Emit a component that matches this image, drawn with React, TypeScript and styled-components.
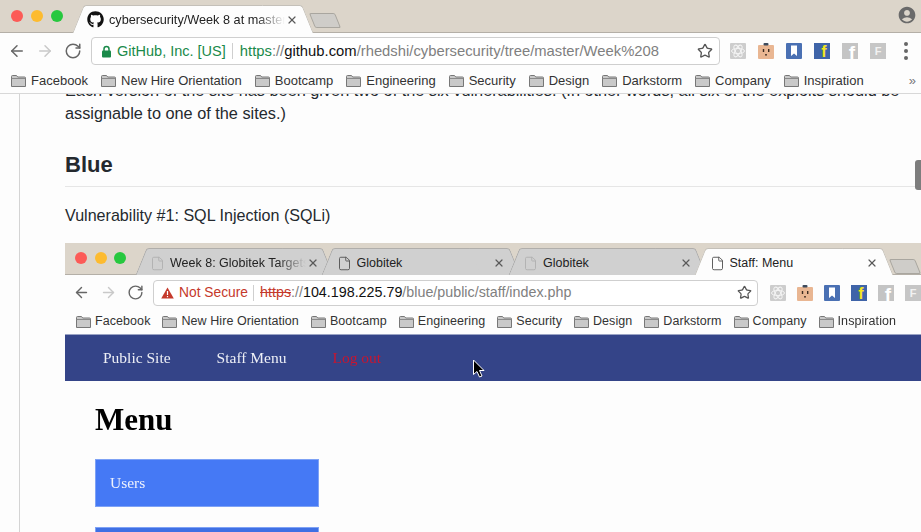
import React from 'react'
import styled, { createGlobalStyle } from 'styled-components'
import { ArrowLeft, ArrowRight, File, RotateCw, Star, X } from 'lucide-react'
import { FaGithub } from 'react-icons/fa'
import { MdAccountCircle } from 'react-icons/md'

const GlobalStyle = createGlobalStyle`
    html, body {
        margin: 0;
        padding: 0;
        width: 921px;
        height: 532px;
        overflow: hidden;
        background: #fdfdfd;
        font-family: 'Liberation Sans', Arial, sans-serif;
    }
`

const Container = styled.div`
    position: relative;
    width: 921px;
    height: 532px;
    display: flex;
    flex-direction: column;
    overflow: hidden;
`

/* browser chrome, used for the real window and for the one in the screenshot */
const TabStrip = styled.div<{ $compact?: boolean }>`
    flex: none;
    display: flex;
    align-items: center;
    box-sizing: border-box;
    height: ${(p) => (p.$compact ? 32 : 33)}px;
    padding-left: ${(p) => (p.$compact ? 10 : 11)}px;
    background: #dcd5ca;
    box-shadow: inset 0 -1px 0 #b4afa7;
`

const Lights = styled.div<{ $compact?: boolean }>`
    display: flex;
    gap: ${(p) => (p.$compact ? 7.5 : 8)}px;
    margin-right: 9px;
    margin-top: ${(p) => (p.$compact ? -3 : -1)}px;
`

const Light = styled.span<{ $color: string }>`
    width: 12px;
    height: 12px;
    border-radius: 50%;
    background: ${(p) => p.$color};
`

const Tab = styled.div<{ $active?: boolean; $width: number; $compact?: boolean; $overlap?: boolean }>`
    position: relative;
    z-index: ${(p) => (p.$active ? 2 : 1)};
    align-self: flex-end;
    flex: none;
    display: flex;
    align-items: center;
    box-sizing: border-box;
    width: ${(p) => p.$width}px;
    height: ${(p) => (p.$compact ? 27 : 28)}px;
    margin-left: ${(p) => (p.$overlap ? -12 : 0)}px;
    padding: ${(p) => (p.$compact ? 3 : 1)}px 15px 0;
    color: #222;

    &::before, &::after {
        content: '';
        position: absolute;
        top: 0;
        bottom: 0;
        width: 40px;
        box-sizing: border-box;
        background: ${(p) => (p.$active ? '#fdfdfd' : '#d0d0d0')};
        border-top: 1px solid ${(p) => (p.$active ? '#c4c0b9' : '#b0aeab')};
    }

    &::before {
        left: 5.5px;
        border-left: 1px solid ${(p) => (p.$active ? '#c4c0b9' : '#a8a8a8')};
        border-top-left-radius: 3px;
        transform: skewX(-22deg);
    }

    &::after {
        right: 5.5px;
        border-right: 1px solid ${(p) => (p.$active ? '#c4c0b9' : '#a8a8a8')};
        border-top-right-radius: 3px;
        transform: skewX(22deg);
    }
`

const TabFill = styled.div<{ $active?: boolean }>`
    position: absolute;
    top: 0;
    bottom: 0;
    left: 25px;
    right: 25px;
    background: ${(p) => (p.$active ? '#fdfdfd' : '#d0d0d0')};
    border-top: 1px solid ${(p) => (p.$active ? '#c4c0b9' : '#b0aeab')};
`

const TabIcon = styled.span<{ $dim?: boolean; $width: number }>`
    position: relative;
    z-index: 1;
    flex: none;
    display: flex;
    width: ${(p) => p.$width}px;
    color: #555;
    opacity: ${(p) => (p.$dim ? 0.25 : 1)};
`

const TabTitle = styled.span<{ $fade?: boolean; $size: number }>`
    position: relative;
    z-index: 1;
    flex: 1;
    min-width: 0;
    margin-left: 2px;
    font-size: ${(p) => p.$size}px;
    white-space: nowrap;
    overflow: hidden;
    ${(p) => (p.$fade ? 'mask-image: linear-gradient(to right, #000 calc(100% - 30px), transparent calc(100% - 1px));' : '')}
`

const TabClose = styled.span`
    position: relative;
    z-index: 1;
    flex: none;
    display: flex;
    color: #5a5a5a;
`

const NewTab = styled.div<{ $compact?: boolean }>`
    flex: none;
    align-self: flex-start;
    box-sizing: border-box;
    width: 26px;
    height: 15px;
    margin-top: ${(p) => (p.$compact ? 16 : 13)}px;
    margin-left: -1px;
    background: #cfcdc9;
    border: 1px solid #a9a69f;
    border-radius: 2px;
    transform: skewX(22deg);
`

const Profile = styled.span`
    display: flex;
    margin-left: auto;
    margin-right: 4px;
    margin-top: -3px;
    color: #6a6a6a;
`

const Toolbar = styled.div<{ $compact?: boolean }>`
    flex: none;
    display: flex;
    align-items: center;
    height: ${(p) => (p.$compact ? 35 : 36)}px;
    padding-left: 8px;
    background: #fdfdfd;
`

const NavButtons = styled.div`
    display: flex;
    gap: 10px;
    margin-right: 9px;
    color: #666;
`

const AddressBar = styled.div<{ $compact?: boolean }>`
    display: flex;
    align-items: center;
    box-sizing: border-box;
    flex: ${(p) => (p.$compact ? '0 0 605px' : '1')};
    min-width: 0;
    height: ${(p) => (p.$compact ? 26 : 28)}px;
    padding: ${(p) => (p.$compact ? '0 5px 0 7px' : '0 6px 0 9px')};
    background: #fff;
    border: 1px solid #cfcfcf;
    border-radius: 4px;
    font-size: ${(p) => (p.$compact ? 13.8 : 14.5)}px;
    white-space: nowrap;
`

const Security = styled.span<{ $color: string }>`
    display: flex;
    align-items: center;
    gap: 5px;
    color: ${(p) => p.$color};
`

const Divider = styled.span<{ $compact?: boolean }>`
    width: 1px;
    height: 16px;
    margin: 0 ${(p) => (p.$compact ? '6px 0 5px' : '7px 0 6px')};
    background: #cfcfcf;
`

const Url = styled.span<{ $size: number }>`
    flex: 1;
    color: #808080;
    font-size: ${(p) => p.$size}px;
`

const UrlHost = styled.span`
    color: #111;
`

const SecureScheme = styled.span`
    color: #1a8a4a;
`

const BrokenScheme = styled.span`
    color: #c5392b;
    text-decoration: line-through;
`

const Extensions = styled.div<{ $compact?: boolean }>`
    flex: none;
    display: flex;
    align-items: center;
    gap: ${(p) => (p.$compact ? 11 : 12)}px;
    margin-left: ${(p) => (p.$compact ? 12 : 10)}px;
`

const MenuDots = styled.span`
    flex: none;
    display: flex;
    flex-direction: column;
    gap: 3px;
    margin: 0 13px 0 18px;

    i {
        width: 4px;
        height: 4px;
        border-radius: 50%;
        background: #666;
    }
`

const BookmarkBar = styled.div<{ $compact?: boolean }>`
    flex: none;
    display: flex;
    align-items: center;
    gap: ${(p) => (p.$compact ? 12 : 13)}px;
    box-sizing: border-box;
    height: ${(p) => (p.$compact ? 24 : 25)}px;
    padding-left: 11px;
    padding-bottom: 1px;
    background: #fdfdfd;
    border-bottom: ${(p) => (p.$compact ? 'none' : '1px solid #d8d8d8')};
    font-size: ${(p) => (p.$compact ? 12.5 : 13)}px;
    letter-spacing: ${(p) => (p.$compact ? 0.07 : 0)}px;
    color: #333;
`

const Bookmark = styled.span<{ $compact?: boolean }>`
    display: flex;
    align-items: center;
    gap: ${(p) => (p.$compact ? 4 : 5)}px;
    white-space: nowrap;
`

const More = styled.span`
    margin-left: auto;
    margin-right: 5px;
    color: #777;
    font-size: 13px;
`

/* page below the chrome */
const Page = styled.div`
    position: relative;
    flex: 1;
    min-height: 0;
    display: flex;
    overflow: hidden;
    background: #fdfdfd;
`

const Gutter = styled.div`
    flex: none;
    width: 1px;
    margin-left: 19px;
    background: #d4d4d4;
`

const Article = styled.div`
    flex: 1;
    min-width: 0;
    margin-top: -15.5px;
    padding-left: 45px;
    color: #24292e;
    line-height: 23px;
`

const Paragraph = styled.p<{ $size: number }>`
    margin: 0;
    font-size: ${(p) => p.$size}px;
    white-space: nowrap;
`

const Heading = styled.h2`
    margin: 25.5px 0 16.5px;
    padding-bottom: 6px;
    border-bottom: 1px solid #e6e6e6;
    font-size: 22px;
    font-weight: 700;
    line-height: 30px;
`

const Shot = styled.div`
    margin-top: 16.5px;
    overflow: hidden;
    filter: blur(0.3px);
`

const ShotNav = styled.nav`
    display: flex;
    gap: 46px;
    height: 47px;
    align-items: center;
    box-sizing: border-box;
    padding-left: 38px;
    padding-bottom: 1px;
    background: #344488;
    border-top: 1px solid #9aa3c4;
    font-family: 'Liberation Serif', 'Times New Roman', serif;
    font-size: 15.5px;
`

const ShotLink = styled.span<{ $danger?: boolean }>`
    color: ${(p) => (p.$danger ? '#c8152f' : '#eef0f6')};
`

const ShotMain = styled.div`
    padding: 20px 30px 0;
    font-family: 'Liberation Serif', 'Times New Roman', serif;
`

const ShotTitle = styled.h1`
    margin: 0 0 20px;
    font-size: 31px;
    line-height: 38px;
    color: #000;
`

const MenuList = styled.div`
    display: flex;
    flex-direction: column;
    gap: 20px;
`

const MenuItem = styled.div<{ $dark?: boolean }>`
    box-sizing: border-box;
    width: 224px;
    height: 48px;
    padding: 0 0 2px 15px;
    display: flex;
    align-items: center;
    background: ${(p) => (p.$dark ? '#3f70e4' : '#4579f5')};
    box-shadow: inset 0 0 0 1px #7ea2f5;
    color: #eef2fd;
    font-size: 15.5px;
`

const Scrollbar = styled.div`
    position: absolute;
    top: 66px;
    right: 0;
    width: 6px;
    height: 30px;
    border-radius: 3px 0 0 3px;
    background: #7d7d7d;
`

const Pointer = styled.svg`
    position: absolute;
    left: 472px;
    top: 359px;
`

const LockIcon = () => (
    <svg width="11" height="13" viewBox="0 0 11 13">
        <path d="M3 6V4a2.5 2.5 0 0 1 5 0v2" fill="none" stroke="#1a8a4a" strokeWidth="1.5" />
        <rect x="1" y="5.5" width="9" height="7" rx="1" fill="#1a8a4a" />
    </svg>
)

const WarnIcon = () => (
    <svg width="13" height="12" viewBox="0 0 13 12">
        <path d="M6.5 0.5L12.8 11.5H0.2Z" fill="#c5392b" />
        <rect x="5.9" y="4" width="1.2" height="4" fill="#fff" />
        <rect x="5.9" y="9" width="1.2" height="1.2" fill="#fff" />
    </svg>
)

const Folder = () => (
    <svg width="15" height="12" viewBox="0 0 15 12">
        <path d="M0.5 11.5V1.5a1 1 0 0 1 1-1h4l1.2 1.5h6.8a1 1 0 0 1 1 1v8.5Z" fill="#c9c9c9" stroke="#777" />
        <path d="M0.5 3.5h14" stroke="#8a8a8a" />
    </svg>
)

const AtomIcon = () => (
    <svg width="16" height="16" viewBox="0 0 16 16">
        <rect width="16" height="16" rx="1" fill="#cdcdcd" />
        <g fill="none" stroke="#f4f4f4">
            <ellipse cx="8" cy="8" rx="6.5" ry="2.6" />
            <ellipse cx="8" cy="8" rx="6.5" ry="2.6" transform="rotate(60 8 8)" />
            <ellipse cx="8" cy="8" rx="6.5" ry="2.6" transform="rotate(120 8 8)" />
        </g>
    </svg>
)

const OutletIcon = () => (
    <svg width="16" height="16" viewBox="0 0 16 16">
        <rect y="2" width="16" height="14" rx="1" fill="#e9b692" />
        <rect x="5.5" y="0" width="5" height="2.5" rx="1" fill="#3d4a5c" />
        <rect x="4.8" y="6" width="1.4" height="3" fill="#3a2a20" />
        <rect x="10" y="6" width="1.4" height="3" fill="#3a2a20" />
        <rect x="7.2" y="11" width="1.6" height="1.6" fill="#3a2a20" />
    </svg>
)

const RibbonIcon = () => (
    <svg width="16" height="16" viewBox="0 0 16 16">
        <rect width="16" height="16" rx="1" fill="#4a70b3" />
        <path d="M5 2.5H11V13L8 10.5L5 13Z" fill="#fff" />
    </svg>
)

const LetterIcon = ({ letter, fill, color, size, x, y }: { letter: string; fill: string; color: string; size: number; x: number; y: number }) => (
    <svg width="16" height="16" viewBox="0 0 16 16">
        <rect width="16" height="16" fill={fill} />
        <text x={x} y={y} textAnchor="middle" fontSize={size} fontWeight="700" fill={color} fontFamily="Liberation Sans, sans-serif">{letter}</text>
    </svg>
)

const extensionIcons = [
    <AtomIcon key="atom" />,
    <OutletIcon key="outlet" />,
    <RibbonIcon key="ribbon" />,
    <LetterIcon key="yellow-f" letter="f" fill="#3f64a8" color="#f4e61c" size={16} x={10} y={14} />,
    <LetterIcon key="grey-f" letter="f" fill="#c4c4c4" color="#fff" size={19} x={10} y={16} />,
    <LetterIcon key="grey-cap" letter="F" fill="#c6c6c6" color="#f2f2f2" size={11} x={8} y={12} />,
]

const bookmarks = ['Facebook', 'New Hire Orientation', 'Bootcamp', 'Engineering', 'Security', 'Design', 'Darkstorm', 'Company', 'Inspiration']

const shotTabs = [
    { title: 'Week 8: Globitek Targets', fade: true, dim: true },
    { title: 'Globitek' },
    { title: 'Globitek', dim: true },
    { title: 'Staff: Menu', active: true },
]

const Bookmarks = ({ compact }: { compact?: boolean }) => (
    <BookmarkBar $compact={compact}>
        {bookmarks.map((name) => (
            <Bookmark $compact={compact} key={name}>
                <Folder />
                {name}
            </Bookmark>
        ))}
        {!compact && <More>»</More>}
    </BookmarkBar>
)

const Nav = ({ size }: { size: number }) => (
    <NavButtons>
        <ArrowLeft size={size} />
        <ArrowRight size={size} color="#c9c9c9" />
        <RotateCw size={size} />
    </NavButtons>
)

const Traffic = ({ compact }: { compact?: boolean }) => (
    <Lights $compact={compact}>
        <Light $color="#fc5b57" />
        <Light $color="#fdbb2f" />
        <Light $color="#27c83f" />
    </Lights>
)

export default function App() {
    return (
        <Container>
            <GlobalStyle />
            <TabStrip>
                <Traffic />
                <Tab $active $width={241}>
                    <TabFill $active />
                    <TabIcon $width={20}><FaGithub size={17} color="#111" /></TabIcon>
                    <TabTitle $fade $size={12.7}>cybersecurity/Week 8 at master · rhedshi/cybersecurity</TabTitle>
                    <TabClose><X size={12} strokeWidth={2.4} /></TabClose>
                </Tab>
                <NewTab />
                <Profile><MdAccountCircle size={20} /></Profile>
            </TabStrip>
            <Toolbar>
                <Nav size={18} />
                <AddressBar>
                    <Security $color="#1a8a4a"><LockIcon />GitHub, Inc. [US]</Security>
                    <Divider />
                    <Url $size={14.8}>
                        <SecureScheme>https</SecureScheme>://<UrlHost>github.com</UrlHost>/rhedshi/cybersecurity/tree/master/Week%208
                    </Url>
                    <Star size={16} color="#555" strokeWidth={2} />
                </AddressBar>
                <Extensions>{extensionIcons}</Extensions>
                <MenuDots><i /><i /><i /></MenuDots>
            </Toolbar>
            <Bookmarks />
            <Page>
                <Gutter />
                <Article>
                    <Paragraph $size={16.3}>Each version of the site has been given two of the six vulnerabilities. (In other words, all six of the exploits should be</Paragraph>
                    <Paragraph $size={16.3}>assignable to one of the sites.)</Paragraph>
                    <Heading>Blue</Heading>
                    <Paragraph $size={16.1}>Vulnerability #1: SQL Injection (SQLi)</Paragraph>
                    <Shot>
                        <TabStrip $compact>
                            <Traffic compact />
                            {shotTabs.map((tab, i) => (
                                <Tab $active={tab.active} $compact $overlap={i > 0} $width={198.5} key={i}>
                                    <TabFill $active={tab.active} />
                                    <TabIcon $dim={tab.dim} $width={18}><File size={15} strokeWidth={1.5} /></TabIcon>
                                    <TabTitle $fade={tab.fade} $size={12.5}>{tab.title}</TabTitle>
                                    <TabClose><X size={12} strokeWidth={2.4} /></TabClose>
                                </Tab>
                            ))}
                            <NewTab $compact />
                        </TabStrip>
                        <Toolbar $compact>
                            <Nav size={17} />
                            <AddressBar $compact>
                                <Security $color="#c5392b"><WarnIcon />Not Secure</Security>
                                <Divider $compact />
                                <Url $size={14.3}>
                                    <BrokenScheme>https</BrokenScheme>://<UrlHost>104.198.225.79</UrlHost>/blue/public/staff/index.php
                                </Url>
                                <Star size={15} color="#555" strokeWidth={2} />
                            </AddressBar>
                            <Extensions $compact>{extensionIcons}</Extensions>
                        </Toolbar>
                        <Bookmarks compact />
                        <ShotNav>
                            <ShotLink>Public Site</ShotLink>
                            <ShotLink>Staff Menu</ShotLink>
                            <ShotLink $danger>Log out</ShotLink>
                        </ShotNav>
                        <ShotMain>
                            <ShotTitle>Menu</ShotTitle>
                            <MenuList>
                                <MenuItem>Users</MenuItem>
                                <MenuItem $dark />
                            </MenuList>
                        </ShotMain>
                    </Shot>
                </Article>
                <Scrollbar />
            </Page>
            <Pointer width="13" height="20" viewBox="0 0 13 20">
                <path d="M1.5 1V15.5L5 12.5L7.5 18L10 17L7.5 11.5H12Z" fill="#000" stroke="#fff" strokeWidth="1" />
            </Pointer>
        </Container>
    )
}
